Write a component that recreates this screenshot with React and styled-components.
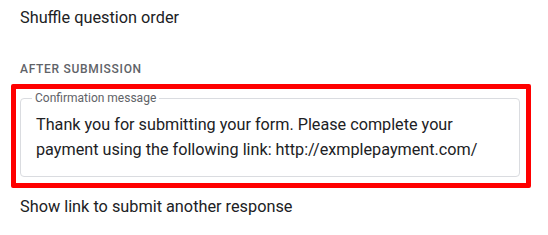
import React from 'react';
import styled, { createGlobalStyle } from 'styled-components';

const GlobalStyle = createGlobalStyle`
  body {
    margin: 0;
    background: #ffffff;
    font-family: Roboto, 'Liberation Sans', Arial, sans-serif;
    color: #202124;
  }
`;

const Page = styled.div`
  width: 548px;
  height: 235px;
  padding-top: 6px;
  box-sizing: border-box;
  overflow: hidden;
`;

const Row = styled.div`
  padding-left: 20px;
  font-size: 16.3px;
  line-height: 24px;
  color: #202124;
  margin-top: ${(p) => p.$gap || 0}px;
`;

const SectionTitle = styled.div`
  margin-top: 31px;
  padding-left: 20px;
  font-size: 12px;
  line-height: 16px;
  font-weight: 500;
  letter-spacing: 0.7px;
  text-transform: uppercase;
  color: #5f6368;
`;

const Highlight = styled.div`
  margin: 7px 17px 0 11px;
  border: 5px solid #ff0000;
  border-radius: 2px;
  padding: 1px 6px 6px 4px;
`;

const Field = styled.fieldset`
  margin: 0;
  padding: 0 12px 14px 11px;
  border: 1px solid #dadce0;
  border-radius: 4px;
  min-width: 0;
`;

const Legend = styled.legend`
  padding: 0 3px;
  font-size: 12px;
  line-height: 16px;
  color: #5f6368;
`;

const Message = styled.div`
  margin-top: 6px;
  padding-left: 4px;
  font-size: 16.2px;
  line-height: 25px;
  color: #202124;
`;

export default function App() {
  return (
    <Page>
      <GlobalStyle />
      <Row>Shuffle question order</Row>
      <SectionTitle>After submission</SectionTitle>
      <Highlight>
        <Field>
          <Legend>Confirmation message</Legend>
          <Message>
            Thank you for submitting your form. Please complete your payment
            using the following link: http://exmplepayment.com/
          </Message>
        </Field>
      </Highlight>
      <Row $gap={7}>Show link to submit another response</Row>
    </Page>
  );
}
